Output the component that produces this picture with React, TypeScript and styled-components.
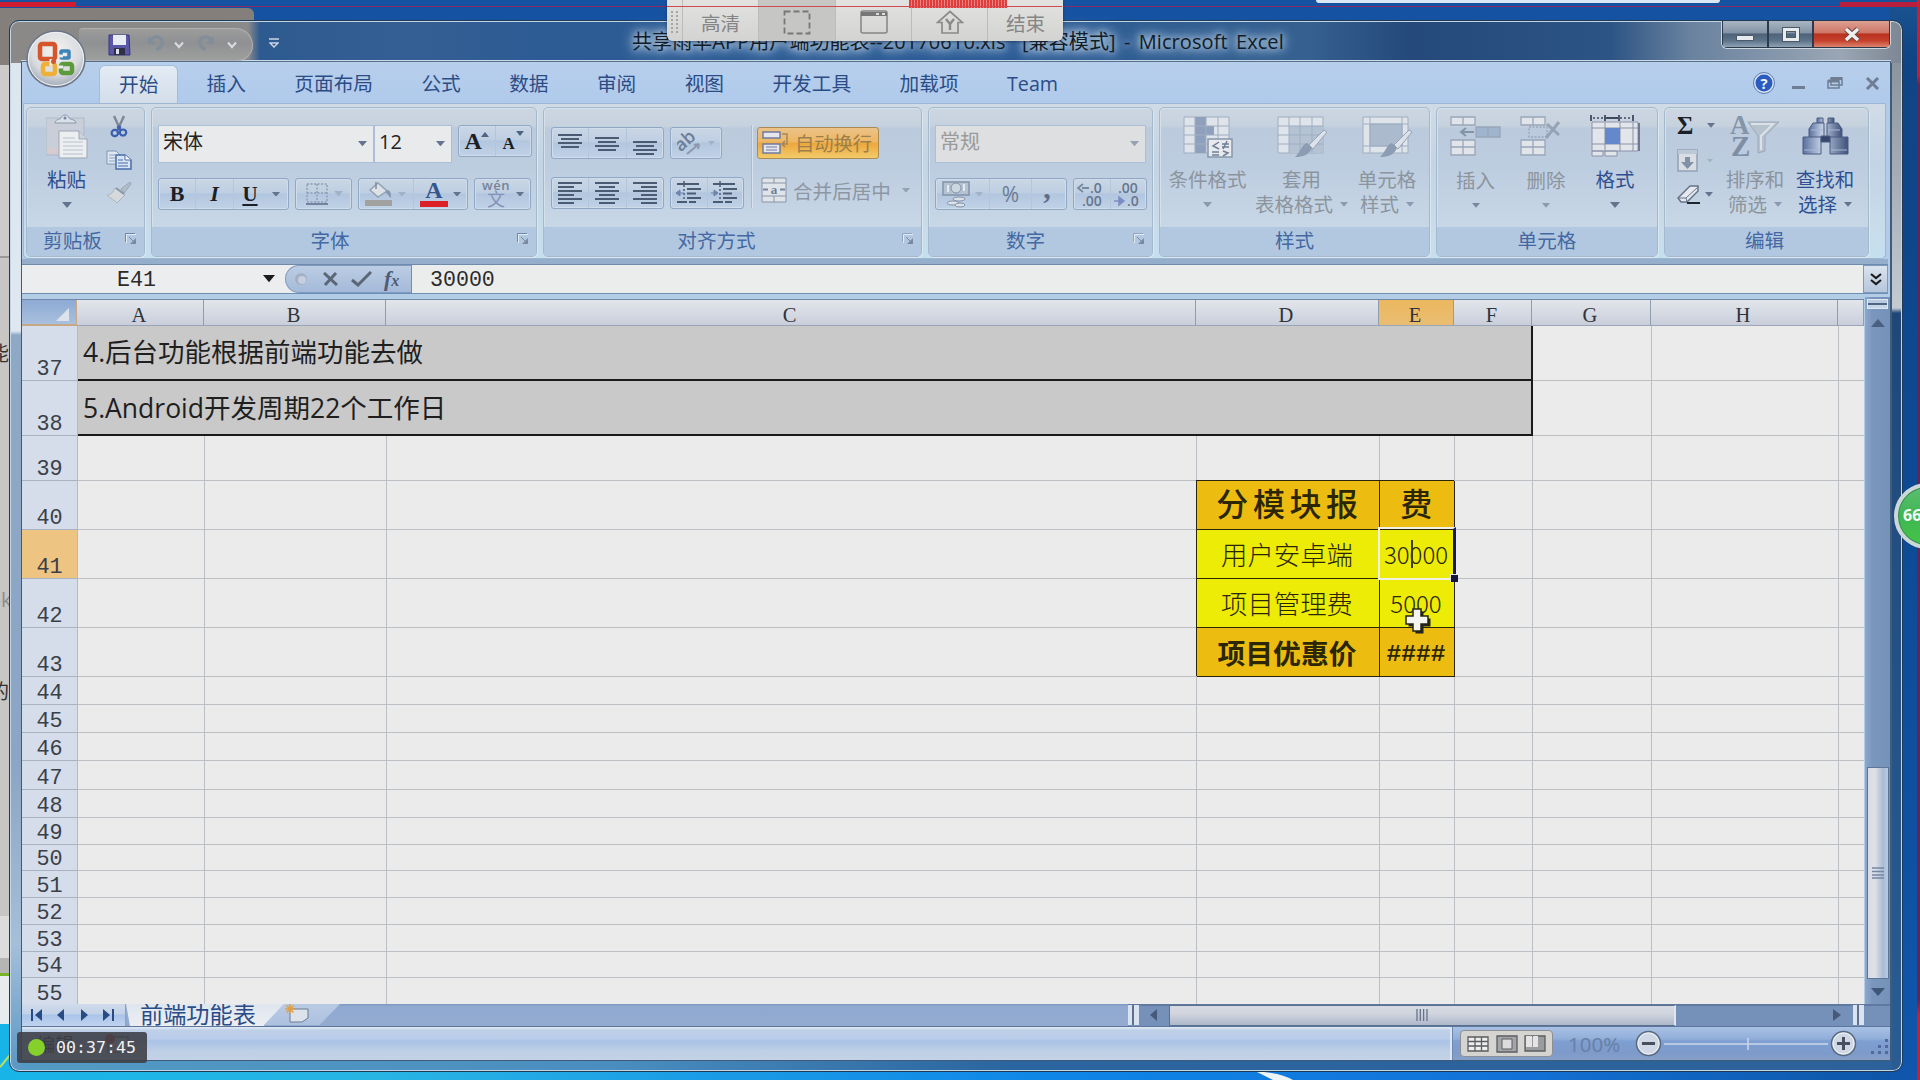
import React from "react";
import styled, { createGlobalStyle, css } from "styled-components";

const ui = `"Open Sans", "Noto Sans CJK SC", sans-serif`;
const mono = `"Liberation Mono", "Noto Sans CJK SC", monospace`;

const Global = createGlobalStyle`
  * { box-sizing: border-box; }
  body { margin: 0; background: #1553a4; overflow: hidden; }
`;

/* ---------- desktop ---------- */
const Desktop = styled.div`
  position: relative;
  width: 1920px;
  height: 1080px;
  overflow: hidden;
  font-family: ${ui};
  font-size: 20px;
  white-space: nowrap;
  background: linear-gradient(90deg, #18b4e8 0, #28b5e4 380px, #1b9ce6 700px, #0e86e8 1050px, #1272d8 1500px, #0f58ab 1860px, #0f52a4 100%);
`;
const TopStrip = styled.div`
  position: absolute;
  inset: 0 0 auto 0;
  height: 22px;
  background: #1652a2;
`;
const RightStrip = styled.div`
  position: absolute;
  top: 0;
  right: 0;
  width: 30px;
  height: 1080px;
  background: linear-gradient(180deg, #1b5390 0, #104484 60px, #0d4a94 500px, #0f56ac 100%);
`;
const BackWindow = styled.div`
  position: absolute;
  left: 0;
  top: 8px;
  width: 254px;
  height: 910px;
  border-radius: 0 6px 0 0;
  background: linear-gradient(180deg, #857f7c 0 57px, #cdcbc9 57px 248px, #9c9a99 248px 250px, #c8c6c4 250px);
`;
const BackGlyph = styled.div<{ $top: number; $faint?: boolean }>`
  position: absolute;
  left: -11px;
  top: ${(p) => p.$top}px;
  font-size: 20px;
  line-height: 24px;
  color: ${(p) => (p.$faint ? "#8d8b8a" : "#333")};
`;
const BackPanel = styled.div`
  position: absolute;
  left: 0;
  top: 916px;
  width: 12px;
  height: 108px;
  background: linear-gradient(180deg, #dcdcdc 0 42px, #b5b5b5 42px 57px, #76b428 57px 60px, #e8ecee 60px);
`;
const TopTab = styled.div`
  position: absolute;
  left: 1316px;
  top: 0;
  width: 404px;
  height: 3px;
  background: #dce8f4;
  border-radius: 0 0 4px 4px;
`;
const Line = styled.div<{ $x: number; $y: number; $w: number; $h: number; $c: string }>`
  position: absolute;
  left: ${(p) => p.$x}px;
  top: ${(p) => p.$y}px;
  width: ${(p) => p.$w}px;
  height: ${(p) => p.$h}px;
  background: ${(p) => p.$c};
`;
const Streak = styled.svg`
  position: absolute;
  left: 0;
  top: 1000px;
`;

/* ---------- window ---------- */
const Win = styled.div`
  position: absolute;
  left: 9px;
  top: 20px;
  width: 1894px;
  height: 1052px;
  border: 1px solid #1f3a55;
  border-radius: 10px;
  box-shadow: inset 0 0 0 1px #c4d6e6;
  padding: 0 11px 10px 11px;
  display: flex;
  flex-direction: column;
  background:
    linear-gradient(90deg, #8a8987 0, #8a8a8a 238px, #2d5a8f 250px, #345f94 400px, #2d5b93 520px, #2c5b94 1000px, #35608f 1300px, #24497a 1400px, #2c5484 1600px, #69829f 1680px, #9aa6b4 1830px, #7d8793 100%) 0 0 / 100% 42px no-repeat,
    linear-gradient(180deg, #dbe6ee 0, #dfe8f0 268px, #8ea9c6 272px, #8ba6c4 700px, #a5bfd9 880px, #5a97c4 100%) 0 42px / 12px 1008px no-repeat,
    linear-gradient(180deg, #8a949f 0, #b4bcc6 180px, #c3cad2 245px, #1f4879 250px, #2a5c92 100%) 1882px 42px / 12px 1008px no-repeat,
    linear-gradient(90deg, #539ac4 0, #4a8ebf 600px, #2b659f 1000px, #2d6199 100%);
`;
const TitleBar = styled.div`
  height: 40px;
  display: flex;
  align-items: center;
  flex: none;
  position: relative;
`;
const QuickBar = styled.div`
  margin: 7px 0 0 58px;
  width: 174px;
  height: 33px;
  border: 1px solid #b0b0b0;
  border-left: 0;
  border-radius: 4px 18px 16px 4px;
  background: linear-gradient(180deg, #9c9c9b, #8e9092 45%, #9ea09f);
  display: flex;
  align-items: center;
  padding-left: 29px;
`;
const Title = styled.div`
  position: absolute;
  left: 611px;
  top: 6px;
  font-size: 20px;
  letter-spacing: 0.08px;
  line-height: 30px;
  color: #111c28;
  word-spacing: 3px;
  text-shadow: 0 0 6px #b5cbe0, 0 0 10px #b5cbe0, 0 0 14px #9fbbd6, 0 0 18px #9fbbd6;
`;
const Buttons = styled.div`
  position: absolute;
  right: 0;
  top: 0;
  display: flex;
  height: 28px;
  border: 1px solid #cdd5de;
  border-top: 0;
  border-radius: 0 0 6px 6px;
  overflow: hidden;
`;
const WinBtn = styled.div<{ $w: number; $close?: boolean }>`
  width: ${(p) => p.$w}px;
  border: 1px solid #2c3b4b;
  border-top: 0;
  display: flex;
  align-items: center;
  justify-content: center;
  background: ${(p) =>
    p.$close
      ? "linear-gradient(180deg,#dba093 0,#cf7766 45%,#b83220 50%,#c5402a 75%,#dc8470)"
      : "linear-gradient(180deg,#a9b5c2 0,#8494a6 45%,#4e6379 50%,#5c7288 75%,#8fa3b5)"};
`;
const Client = styled.div`
  flex: 1;
  border: 1px solid #3f5b7a;
  border-top-color: #566f8a;
  box-shadow: 0 -1px 0 #c9d9e8;
  background: #b3cbe8;
  display: flex;
  flex-direction: column;
  min-height: 0;
`;
const TabRow = styled.div`
  height: 41px;
  flex: none;
  display: flex;
  align-items: flex-end;
  padding: 0 20px 0 77px;
  background: linear-gradient(180deg, #b7cfeb, #b0caec);
`;
const Tab = styled.div<{ $active?: boolean }>`
  height: 38px;
  line-height: 37px;
  font-size: 19.7px;
  padding: 0 24.2px;
  color: #2c4c86;
  ${(p) =>
    p.$active &&
    css`
      padding: 0 19px;
      margin-right: 4px;
      border: 1px solid #a3bcd8;
      border-bottom: 0;
      border-radius: 6px 6px 0 0;
      background: linear-gradient(180deg, #e3ebf4, #d3deea);
    `}
`;
const TabTools = styled.div`
  margin-left: auto;
  height: 40px;
  display: flex;
  align-items: center;
  margin-right: -10px;
`;

/* ---------- ribbon ---------- */
const Ribbon = styled.div`
  flex: none;
  height: 156px;
  margin: 0 4px 0 1px;
  padding: 3px 0 0 2px;
  border: 1px solid #9cb6d3;
  border-radius: 0 0 5px 5px;
  background: linear-gradient(180deg, #d0dbe6 0, #c3d4e5 40%, #c8dcea 80%, #c5e0ef);
  display: flex;
  gap: 6px;
`;
const Group = styled.div<{ $w: number }>`
  width: ${(p) => p.$w}px;
  height: 150px;
  border: 1px solid #a5b9cd;
  border-radius: 5px;
  box-shadow: 1px 1px 0 #dbe6ef, inset 1px 1px 0 #d6e0e9;
  display: flex;
  flex-direction: column;
  overflow: hidden;
  background: linear-gradient(180deg, #ccd6e2 0, #c7d2df 18px, #bbcadc 20px, #bdcde0 60px, #c8d7e6 118px);
`;
const Body = styled.div<{ $pad?: string; $gap?: number; $col?: boolean }>`
  flex: 1;
  display: flex;
  flex-direction: ${(p) => (p.$col ? "column" : "row")};
  padding: ${(p) => p.$pad ?? "0"};
  gap: ${(p) => p.$gap ?? 0}px;
`;
const Label = styled.div<{ $shift?: number }>`
  flex: none;
  height: 29px;
  background: #b2c8e0;
  color: #4468a2;
  font-size: 19.6px;
  line-height: 28px;
  display: flex;
  justify-content: center;
  position: relative;
  span { margin-left: ${(p) => p.$shift ?? 0}px; }
  svg { position: absolute; right: 7px; top: 5px; }
`;
const Row = styled.div<{ $gap?: number; $h?: number; $mt?: number; $ml?: number }>`
  display: flex;
  gap: ${(p) => p.$gap ?? 6}px;
  height: ${(p) => (p.$h ? p.$h + "px" : "auto")};
  margin-top: ${(p) => p.$mt ?? 0}px;
  margin-left: ${(p) => p.$ml ?? 0}px;
  flex: none;
`;
const Combo = styled.div<{ $w: number; $off?: boolean }>`
  width: ${(p) => p.$w}px;
  height: 38px;
  border: 1px solid #abc0d8;
  background: ${(p) => (p.$off ? "#dddfe0" : "#e8eaec")};
  color: ${(p) => (p.$off ? "#9a9a9a" : "#222")};
  display: flex;
  justify-content: space-between;
  padding: 0 6px 0 4px;
  font-size: 20px;
  line-height: 32px;
  svg { margin-top: 15px; }
`;
const Box = styled.div<{ $w: number; $h?: number }>`
  width: ${(p) => p.$w}px;
  height: ${(p) => p.$h ?? 32}px;
  border: 1px solid #8fa8c6;
  border-radius: 3px;
  display: flex;
  background: linear-gradient(180deg, #c9d6e5 0, #bfcfe2 45%, #b2c6df 50%, #c0d2e6);
  box-shadow: inset 0 0 0 1px #d0dcea;
`;
const Cell = styled.div<{ $w?: number }>`
  ${(p) => (p.$w ? `width:${p.$w}px;` : "flex:1;")}
  display: flex;
  align-items: center;
  justify-content: center;
  gap: 5px;
  & + & { border-left: 1px solid #b3c6dc; }
`;
const Glyph = styled.span<{ $size: number; $italic?: boolean; $under?: boolean }>`
  font: ${(p) => (p.$italic ? "italic" : "normal")} bold ${(p) => p.$size}px/1 "Liberation Serif", serif;
  color: #1c1f26;
  text-decoration: ${(p) => (p.$under ? "underline" : "none")};
  text-underline-offset: 3px;
`;
const Wrap = styled.div`
  width: 122px;
  height: 32px;
  border: 1px solid #a98b52;
  border-radius: 3px;
  display: flex;
  align-items: center;
  gap: 7px;
  padding-left: 4px;
  color: #9c7f4a;
  font-size: 19.3px;
  background: linear-gradient(180deg, #ecc287 0, #edb765 45%, #eda73c 52%, #f2cb6b);
`;
const Merge = styled.div`
  height: 32px;
  display: flex;
  align-items: center;
  gap: 6px;
  padding-left: 4px;
  color: #8d97a3;
  font-size: 19.6px;
  margin-top: -2px;
  svg:last-child { margin-left: 5px; }
`;
const Divider = styled.div`
  width: 2px;
  height: 83px;
  background: #a9bcd2;
  border-right: 1px solid #d7e2ec;
`;
const Big = styled.div<{ $w: number; $on?: boolean; $down?: number }>`
  width: ${(p) => p.$w}px;
  display: flex;
  flex-direction: column;
  align-items: center;
  color: ${(p) => (p.$on ? "#2f5090" : "#8c949e")};
  font-size: 19.5px;
  line-height: 25px;
  padding-top: 6px;
  > svg:first-child { margin-bottom: ${(p) => 9 + (p.$down ?? 0)}px; }
`;
const Under = styled.div`
  display: flex;
  align-items: center;
  gap: 7px;
  height: 25px;
`;
const Tools = styled.div<{ $w: number; $gap: number; $pt: number }>`
  width: ${(p) => p.$w}px;
  display: flex;
  flex-direction: column;
  align-items: flex-start;
  gap: ${(p) => p.$gap}px;
  padding-top: ${(p) => p.$pt}px;
`;

/* ---------- formula bar ---------- */
const Formula = styled.div`
  flex: none;
  height: 35px;
  margin-right: 2px;
  padding: 6px 0 0 0;
  background: linear-gradient(180deg, #94aecb 0 5px, #6f8bab 5px 6px, transparent 6px);
  display: flex;
  border-bottom: 1px solid #6e8fb4;
  font-family: ${mono};
  font-size: 21.6px;
  line-height: 31px;
  color: #2a2a2a;
`;
const NameBox = styled.div`
  width: 263px;
  background: #ecedee;
  display: flex;
  align-items: center;
  > span { width: 39px; margin: 3px 0 0 95px; }
  > svg { margin-left: 107px; }
`;
const FxBar = styled.div`
  width: 127px;
  background: #ecedee;
  border-right: 1px solid #6e8fb4;
  > div {
    height: 100%;
    border-radius: 14px 0 0 14px;
    border: 1px solid #7f9ac0;
    border-right: 0;
    background: linear-gradient(180deg, #bccde4, #a4bad9);
    display: flex;
    align-items: center;
    padding-left: 8px;
    gap: 15px;
  }
`;
const FormulaText = styled.div`
  flex: 1;
  background: #ebecec;
  padding-left: 18px;
`;
const Expand = styled.div`
  width: 25px;
  border: 1px solid #7f9ac0;
  background: linear-gradient(180deg, #dbe3ee, #b5c6dc);
  display: flex;
  align-items: center;
  justify-content: center;
`;

/* ---------- sheet ---------- */
const Main = styled.div`
  flex: none;
  height: 710px;
  display: flex;
  padding-top: 3px;
  background: #b3cde6;
`;
const Grid = styled.div`
  width: 1843px;
  margin-top: 2px;
  border-top: 1px solid #7089a8;
  overflow: hidden;
  background: #ebebec;
`;
const Line0 = styled.div<{ $h: number }>`
  display: flex;
  height: ${(p) => p.$h}px;
`;
const Corner = styled.div`
  width: 56px;
  border-right: 1px solid #c7a882;
  border-bottom: 2px solid #c7a882;
  background: linear-gradient(180deg, #8eaad4, #a9c0de);
  display: flex;
  justify-content: flex-end;
  align-items: flex-end;
  padding: 0 7px 3px 0;
`;
const ColHead = styled.div<{ $w: number; $sel?: boolean }>`
  width: ${(p) => p.$w}px;
  flex: none;
  text-align: center;
  font: 20.5px/30px "Liberation Serif", serif;
  color: #2f343a;
  padding-right: 2px;
  border-right: 1px solid #8f9dae;
  border-bottom: 1px solid #9aa6b5;
  background: ${(p) => (p.$sel ? "linear-gradient(180deg,#ebb85e,#e9bd72)" : "linear-gradient(180deg,#e2e5ea 0,#d6dae3 50%,#c9cedb)")};
`;
const RowHead = styled.div<{ $sel?: boolean }>`
  width: 56px;
  flex: none;
  display: flex;
  align-items: flex-end;
  justify-content: center;
  font: 21.8px/20px ${mono};
  color: #3a4048;
  border-right: 1px solid #a9bcd4;
  border-bottom: 1px solid #a7b3c2;
  background: ${(p) => (p.$sel ? "#edc482" : "#d4dde9")};
`;
const Note = styled.div`
  width: 1455px;
  flex: none;
  background: #c9c9c9;
  border-bottom: 2px solid #1a1a1a;
  border-right: 2px solid #1a1a1a;
  font-size: 26.5px;
  color: #1f1f1f;
  padding-left: 5px;
  display: flex;
  align-items: center;
  font-family: "Open Sans", "Noto Sans CJK SC", sans-serif;
`;
type Tone = "gold" | "yellow" | undefined;
const GridCell = styled.div<{ $w: number; $tone?: Tone }>`
  width: ${(p) => p.$w}px;
  flex: none;
  position: relative;
  border-right: 1px solid #bcbfc3;
  border-bottom: 1px solid #bcbfc3;
  display: flex;
  align-items: center;
  justify-content: center;
  ${(p) =>
    p.$tone &&
    css`
      padding-right: 2px;
      background: ${p.$tone === "gold" ? "#ecbd10" : "#ecec06"};
      border-color: #2a2408;
      box-shadow: -1px -1px 0 #2a2408;
    `}
`;
const CellText = styled.span<{ $kind: string }>`
  color: #2b2606;
  line-height: 30px;
  ${(p) => p.$kind === "head" && `font-family:"Noto Sans CJK SC",sans-serif;font-size:32px;font-weight:500;letter-spacing:4.6px;margin-right:-5px;margin-top:-7px;`}
  ${(p) => p.$kind === "item" && `font-family:"Noto Sans CJK SC",sans-serif;font-size:26.4px;font-weight:300;margin-top:-1px;`}
  ${(p) => p.$kind === "num" && `font-family:"Noto Sans CJK SC",sans-serif;font-size:24px;font-weight:300;margin-top:-1px;`}
  ${(p) => p.$kind === "total" && `font-family:"Noto Sans CJK SC",sans-serif;font-size:27.8px;font-weight:700;margin-top:-1px;`}
  ${(p) => p.$kind === "hash" && `font-family:"Liberation Mono",monospace;font-size:24.5px;font-weight:700;margin-top:6px;`}
`;
const Selection = styled.div`
  position: absolute;
  left: -2px;
  top: -3px;
  width: 78px;
  height: 53px;
  border: 2px solid #f0f0e4;
  border-right: 3px solid #15157a;
  z-index: 1;
  &::after {
    content: "";
    position: absolute;
    right: -5px;
    bottom: -4px;
    width: 7px;
    height: 7px;
    background: #16163c;
    border: 1px solid #e8e8e8;
    border-width: 1px 0 0 1px;
  }
`;
const Caret = styled.div`
  position: absolute;
  left: 31px;
  top: 10px;
  width: 2px;
  height: 28px;
  background: #3c3c10;
`;
const VScroll = styled.div`
  width: 25px;
  margin-left: 1px;
  padding: 2px 2px 0 2px;
  background: linear-gradient(90deg, #8da8cc, #7a96bd 30%, #7592b8);
  display: flex;
  flex-direction: column;
  align-items: center;
`;
const VSplit = styled.div`
  width: 21px;
  height: 10px;
  border: 1px solid #dfe8f1;
  background: linear-gradient(180deg, #b9cce2 0 3px, #4f6580 3px 5px, #c5d6e8 5px);
`;
const VThumb = styled.div`
  width: 22px;
  height: 212px;
  border: 1px solid #5d7596;
  background: linear-gradient(90deg, #d7dbe4 0, #dfe1e6 35%, #a9bcd6 75%, #b9cbe2);
  display: flex;
  align-items: center;
  justify-content: center;
`;

/* ---------- sheet tabs and status bar ---------- */
const SheetBar = styled.div`
  flex: none;
  height: 23px;
  display: flex;
  border-bottom: 1px solid #5d769c;
  background: linear-gradient(180deg, #7f9ac4 0 1px, #90a9d0 2px, #94abcf);
`;
const Nav = styled.div`
  width: 104px;
  display: flex;
  align-items: center;
  justify-content: space-between;
  padding: 0 10px 0 8px;
  background: linear-gradient(180deg, #cfdbea 0, #c3d2e8 45%, #a9c4ea 50%, #c0d3ee);
  border-right: 1px solid #8aa2c4;
`;
const SheetTab = styled.div`
  width: 160px;
  height: 22px;
  padding-left: 14px;
  color: #2b4c86;
  font-size: 23.2px;
  line-height: 21px;
  clip-path: polygon(0 0, 100% 0, 86% 100%, 4px 100%);
  background: linear-gradient(180deg, #dfe6ef, #ebeff3);
`;
const NewTab = styled.div`
  width: 76px;
  height: 21px;
  margin-left: -22px;
  display: flex;
  justify-content: center;
  padding-right: 8px;
  clip-path: polygon(26% 0, 100% 0, 73% 100%, 0 100%);
  background: linear-gradient(180deg, #b9cae3, #adc1e0);
`;
const HScroll = styled.div`
  margin-left: auto;
  width: 762px;
  display: flex;
  align-items: center;
  background: linear-gradient(180deg, #60799f 0 2px, #7591b9 2px);
`;
const HSplit = styled.div<{ $ml?: number }>`
  width: 11px;
  height: 20px;
  flex: none;
  margin-left: ${(p) => p.$ml ?? 0}px;
  background: linear-gradient(90deg, #d9e4f0 0 4px, #5c718c 4px 6px, #d9e4f0 6px);
`;
const HThumb = styled.div`
  width: 507px;
  height: 21px;
  flex: none;
  margin-left: 12px;
  border: 1px solid #5a7091;
  border-right: 2px solid #dfe6f0;
  background: linear-gradient(180deg, #d6dae2 0, #d0d5de 40%, #aeb8cb);
  display: flex;
  align-items: center;
  justify-content: center;
`;
const Status = styled.div`
  flex: 1;
  display: flex;
  justify-content: flex-end;
  background: linear-gradient(180deg, #dbe6f2 0 1px, #bfd0e8 3px, #b9cdea 12px, #a9c2e6 14px, #bed0e6 24px, #c3d2e6);
`;
const StatusLeft = styled.div`
  flex: 1;
  display: flex;
  align-items: center;
  gap: 30px;
  padding-left: 14px;
  color: #222;
  font-size: 19px;
  border-right: 2px solid #dbe6f2;
`;
const StatusRight = styled.div`
  width: 438px;
  display: flex;
  align-items: center;
  padding: 0 1px 0 7px;
  border-left: 1px solid #6e89b0;
  background: linear-gradient(180deg, #a9c1e4 0, #91aeda 12px, #7e9fd2 14px, #7d9aca 26px, #86a0c8);
`;
const Views = styled.div`
  width: 93px;
  height: 27px;
  border: 1px solid #8c8f93;
  border-radius: 4px;
  background: #d5d4d0;
  display: flex;
  align-items: center;
  justify-content: space-evenly;
`;
const Zoom = styled.div`
  width: 82px;
  padding-left: 15px;
  color: #6a80a6;
  font-size: 20.5px;
  line-height: 28px;
  font-family: "Noto Sans", sans-serif;
`;

/* ---------- overlays ---------- */
const Orb = styled.svg`
  position: absolute;
  left: 24px;
  top: 28px;
`;
const Recorder = styled.div`
  position: absolute;
  left: 667px;
  top: 0;
  width: 396px;
  height: 41px;
  display: flex;
  border-radius: 0 0 6px 6px;
  background: linear-gradient(180deg, #e2e2e1, #d3d3d2);
  box-shadow: 0 1px 3px rgba(20, 40, 70, 0.6);
  color: #858585;
  font-size: 19.6px;
  overflow: hidden;
`;
const Seg = styled.div<{ $w: number; $dark?: boolean }>`
  width: ${(p) => p.$w}px;
  flex: none;
  display: flex;
  align-items: center;
  justify-content: center;
  padding-top: 4px;
  border-right: 1px solid #bcbcbc;
  background: ${(p) => (p.$dark ? "#c6c6c5" : "transparent")};
  &:last-child { border: 0; }
`;
const Dotted = styled.div`
  position: absolute;
  left: 909px;
  top: 0;
  width: 98px;
  height: 8px;
  background: repeating-linear-gradient(90deg, #e23b3b 0 2px, #e88484 2px 3px);
`;
const Timer = styled.div`
  position: absolute;
  left: 17px;
  top: 1032px;
  width: 130px;
  height: 31px;
  border-radius: 3px;
  background: rgba(62, 64, 72, 0.9);
  display: flex;
  align-items: center;
  padding-left: 11px;
  gap: 11px;
  color: #f2f2f2;
  font: 16.6px/33px "DejaVu Sans Mono", monospace;
  i { width: 17px; height: 17px; border-radius: 50%; background: #86d02c; }
`;
const Ball = styled.div`
  position: absolute;
  left: 1894px;
  top: 483px;
  width: 66px;
  height: 66px;
  border-radius: 50%;
  border: 4px solid #ccd8d8;
  background: linear-gradient(180deg, #5cbf70 0, #3fb653 50%, #46c447);
  box-shadow: inset 0 0 0 1px #3a8a56;
  color: #f4faf4;
  font: 700 16px/57px "Noto Sans", sans-serif;
  padding-left: 5px;
`;
const Pointer = styled.svg`
  position: absolute;
  left: 1404px;
  top: 608px;
`;

/* ---------- icons ---------- */
const Caret5 = ({ c = "#64748c", w = 10 }: { c?: string; w?: number }) => (
  <svg width={w} height={w * 0.6} viewBox="0 0 10 6"><path d="M0 0h10L5 6z" fill={c} /></svg>
);
const Chevron = ({ ml }: { ml: number }) => (
  <svg width="10" height="8" viewBox="0 0 10 8" style={{ marginLeft: ml }}><path d="M1 1.500l4 4.500 4-4.500" stroke="#d5d9dd" strokeWidth="2.200" fill="none" /></svg>
);
const Launcher = ({ c = "#6d86ab" }: { c?: string }) => (
  <svg width="13" height="13" viewBox="0 0 13 13" fill="none" stroke={c}>
    <path d="M1.5 10V1.5H11" /><path d="M5 5l5 5" stroke="#7b8aa0" /><path d="M12 6v6H6z" fill="#7b8aa0" stroke="none" /><path d="M2.500 11V2.500H12" stroke="#e3ebf3" />
  </svg>
);
const Lines = ({ rows, y = 4 }: { rows: [number, number][]; y?: number }) => (
  <svg width="26" height="28" viewBox="0 0 26 28" stroke="#4c5b74" strokeWidth="1.8">
    {rows.map(([a, b], i) => <path key={i} d={`M${a} ${y + i * 4}H${b}`} />)}
  </svg>
);
const Indent = ({ flip }: { flip?: boolean }) => (
  <svg width="28" height="28" viewBox="0 0 28 28" stroke="#4c5b74" strokeWidth="2" fill="none">
    <path d="M2 5h22M12 10h14M12 14.500h9M12 19h14M2 23h10M14 23h7" /><path d="M9 2v24" strokeDasharray="2 2" strokeWidth="1.500" />
    <path d={flip ? "M0 14h5M3 11l4 3-4 3z" : "M9 14H4M5 11l-4 3 4 3z"} stroke="#6c83ad" fill="#6c83ad" strokeWidth="1" />
  </svg>
);
const Paste = () => (
  <svg width="42" height="46" viewBox="0 0 42 46">
    <path d="M0 4h38v37H0z" fill="#c9ced8" stroke="#aeb9c9" /><path d="M1 34h12v6H1z" fill="#d8cbcf" />
    <path d="M9 9c0-4 5-3 6-5 1-4 7-4 8 0 1 2 7 1 7 5z" fill="#d9e0e8" stroke="#8898ae" /><circle cx="19" cy="4" r="1.500" fill="#76869e" />
    <path d="M13 17h20l8 8v19H13z" fill="#eceef0" stroke="#9aa7b8" /><path d="M33 17v8h8" fill="#cdd4dd" stroke="#9aa7b8" />
    <path d="M17 24h12M17 28h20M17 32h20M17 36h20M17 40h20" stroke="#b8c1cd" />
  </svg>
);
const Cut = () => (
  <svg width="18" height="23" viewBox="0 0 18 23" fill="none">
    <path d="M4 1l6 13M14 1L8 14" stroke="#7b8796" strokeWidth="2.400" /><path d="M7.500 11l3 4M10.500 11l-3 4" stroke="#3f62a8" strokeWidth="2.500" />
    <ellipse cx="4.800" cy="18" rx="3.200" ry="3.200" stroke="#3a5fae" strokeWidth="2.200" /><ellipse cx="13" cy="17.500" rx="3.200" ry="3" stroke="#3a5fae" strokeWidth="2.200" />
  </svg>
);
const Copy = () => (
  <svg width="26" height="20" viewBox="0 0 26 20" stroke="#4a6ca8">
    <path d="M1 1h9l4 4v9H1z" fill="#dfe7f1" stroke="#7f97bb" /><path d="M3 5h6M3 8h8M3 11h8" stroke="#8ba2c4" />
    <path d="M10 5h9l6 5v9H10z" fill="#d7e4f4" strokeWidth="1.500" /><path d="M19 5v5h6" fill="#fff" /><path d="M12 10h5M12 13h10M12 16h10" />
  </svg>
);
const Brush = () => (
  <svg width="26" height="22" viewBox="0 0 26 22">
    <path d="M24 0l-9 7 3 4 7-9z" fill="#b3bcc9" stroke="#98a5b6" /><path d="M9 6l10 7-8 8c-3-3-6-4-10-8 4 0 6-3 8-7z" fill="#d6d9dc" stroke="#a9b2be" /><path d="M10 6l8 6" stroke="#8b98aa" strokeWidth="2" />
  </svg>
);
const BordersIcon = () => (
  <svg width="24" height="24" viewBox="0 0 24 24" stroke="#8c9cb2" fill="none"><path d="M2 2h20v18H2zM12 2v18M2 11h20" strokeDasharray="2 1.500" strokeWidth="1.400" /><path d="M1 22h22" stroke="#7284a0" strokeWidth="2" /></svg>
);
const Bucket = () => (
  <svg width="28" height="26" viewBox="0 0 28 26"><path d="M5 9l8-7 9 8-9 6z" fill="#dde2e7" stroke="#93a1b3" strokeWidth="1.500" /><path d="M11 8V1" stroke="#7d8ca0" strokeWidth="1.500" /><path d="M21 9c5 0 5 3 5 8-2-1-3-4-5-5z" fill="#8597b0" /><path d="M0 19h27v6H0z" fill="#a1a1a0" /></svg>
);
const FontColor = () => (
  <svg width="28" height="28" viewBox="0 0 28 28"><text x="14" y="18" textAnchor="middle" fontFamily="Liberation Serif, serif" fontWeight="700" fontSize="24" fill="#34578e">A</text><path d="M0 21h28v6H0z" fill="#dc2028" /></svg>
);
const Wen = () => (
  <svg width="30" height="28" viewBox="0 0 30 28"><text x="15" y="10" textAnchor="middle" fontFamily="Open Sans, sans-serif" fontWeight="600" fontSize="13" fill="#74839a" letterSpacing=".5">wén</text><text x="15" y="26" textAnchor="middle" fontFamily="Noto Sans CJK SC, sans-serif" fontSize="18" fill="#8291b8">文</text></svg>
);
const Rotate = () => (
  <svg width="26" height="26" viewBox="0 0 26 26"><text x="0" y="17" transform="rotate(-42 9 15)" fontFamily="Open Sans, sans-serif" fontWeight="600" fontSize="18" fill="#6f7e94">ab</text><path d="M10 24L22 14M22 14l-5 1M22 14l-1 5" stroke="#8c99ad" strokeWidth="2" /></svg>
);
const WrapIcon = () => (
  <svg width="26" height="28" viewBox="0 0 26 28" fill="#e6e6ec" stroke="#6f7ba0" strokeWidth="1.500"><path d="M1 3h17v6H1zM1 15h17v9H1z" /><path d="M4 18h11M4 21h11" strokeWidth="1.200" /><path d="M20 5h5v10h-4M23 12l-3 3 3 3" fill="none" stroke="#a5865a" /></svg>
);
const MergeIcon = () => (
  <svg width="26" height="26" viewBox="0 0 26 26" stroke="#8794a8" fill="#dfe4e9"><path d="M1 1h24v24H1z" /><path d="M1 6h24M1 19h24M13 1v5M13 19v6" /><path d="M2 12.500h5M19 12.500h5" stroke="#75869f" strokeWidth="2" /><text x="13" y="17" textAnchor="middle" fontFamily="Liberation Serif, serif" fontWeight="700" fontSize="13" fill="#6c7c95" stroke="none">a</text></svg>
);
const Money = () => (
  <svg width="28" height="30" viewBox="0 0 28 30" stroke="#8292a8" fill="#b5c2d2"><path d="M1 3h26v13H1z" strokeWidth="1.500" /><circle cx="14" cy="9" r="5" fill="#ccd6e1" /><path d="M6 6v7M22 5v7" stroke="#e3e9ef" strokeWidth="2" /><ellipse cx="17" cy="20" rx="6" ry="2" fill="#dce2e8" /><ellipse cx="11" cy="24" rx="6" ry="2" fill="#dce2e8" /><ellipse cx="18" cy="26" rx="5" ry="2" fill="#dce2e8" /></svg>
);
const Dec = ({ less }: { less?: boolean }) => (
  <svg width="30" height="28" viewBox="0 0 30 28" fontFamily="Open Sans, sans-serif" fontWeight="600" fontSize="14" fill="#67768c">
    {less ? <><text x="5" y="13">.00</text><text x="14" y="26">.0</text><path d="M1 21h7M6 17l5 4-5 4z" fill="#7b8dc4" stroke="#7b8dc4" strokeWidth="1.500" /></> : <><text x="13" y="13">.0</text><text x="5" y="26">.00</text><path d="M12 8H5M6 4L1 8l5 4" fill="none" stroke="#76889f" strokeWidth="1.800" /></>}
  </svg>
);
const SheetIcon = ({ kind }: { kind: "cond" | "table" | "cell" }) => (
  <svg width="50" height="43" viewBox="0 0 50 43" stroke="#9faec2" fill="#dfe4ea">
    <path d="M1 2h45v36H1z" />
    {kind === "cell" ? <><path d="M8 9h32v22H8z" fill="#abbacd" /><path d="M1 9h45M1 31h45M8 2v36M40 2v36" /></> : <><path d={kind === "cond" ? "M12 2h11v9h8v9h-8v18H12z" : "M12 11h34v27H12z"} fill={kind === "cond" ? "#8fa0bd" : "#b4c2d4"} stroke="none" /><path d="M1 11h45M1 20h45M1 29h45M12 2v36M23 2v36M35 2v36" /></>}
    {kind === "cond" ? <><path d="M25 24h24v18H25z" fill="#e7e9ec" stroke="#8796ab" strokeWidth="1.500" /><path d="M36 27l-6 4 6 3M29 37h7M29 40h7M39 29h7M39 32h7M44 26l-4 8M40 36l5 2-5 3" stroke="#6f7f97" strokeWidth="1.500" fill="none" /></> : <><path d="M47 15l3 2-14 17-4-4z" fill="#dce2e8" stroke="#94a3b7" /><path d="M30 28l5 5c-3 7-9 9-17 9 5-4 7-13 12-14z" fill="#8c9cb2" stroke="none" /></>}
  </svg>
);
const CellsIcon = ({ del }: { del?: boolean }) => (
  <svg width="52" height="43" viewBox="0 0 52 43" stroke="#98a6ba" fill="#e1e5ea" strokeWidth="1.300">
    <path d="M1 2h24v8H1zM13 2v8M1 25h24v15H1zM13 25v15M1 32h24" />
    {del ? <><path d="M9 12h18v10H9z" fill="none" strokeDasharray="2 1.500" /><path d="M27 9l12 11M39 7L26 23" stroke="#95a3b6" strokeWidth="3" /></> : <><path d="M26 12h24v10H26zM38 12v10" fill="#9fb4cd" /><path d="M24 17H12M16 13l-5 4 5 4" fill="none" stroke="#8393aa" strokeWidth="2" /></>}
  </svg>
);
const FormatIcon = () => (
  <svg width="52" height="44" viewBox="0 0 52 44" stroke="#8a93a8" fill="#e2e5ea">
    <path d="M3 7h46v29H3zM3 36h11v5H3zM16 36h12v5H16z" /><path d="M3 13h46M3 29h46M16 7v29M31 7v29M44 7v29" /><path d="M16 13h15v16H16z" fill="#6488cc" stroke="none" />
    <path d="M2 0v6M44 0v6M16 0v6M30 0v6M17 3h12" stroke="#3d4a5e" strokeWidth="1.800" /><path d="M4 3h11M31 3h12" stroke="#3d4a5e" strokeDasharray="2 2" strokeWidth="1.500" /><path d="M50 8v28" stroke="#6d7890" strokeWidth="2" />
  </svg>
);
const SortIcon = () => (
  <svg width="52" height="44" viewBox="0 0 52 44"><path d="M19 8h31L36 22v15l-7 2V22z" fill="#b7c2cf" stroke="#9aa8b9" /><path d="M22 10h22L32 22v14" fill="none" stroke="#dbe1e7" strokeWidth="2" /><text x="1" y="20" fontFamily="Liberation Serif, serif" fontSize="27" fontWeight="700" fill="#8494a9">A</text><text x="2" y="42" fontFamily="Liberation Serif, serif" fontSize="29" fontWeight="700" fill="#7e8ea4">Z</text></svg>
);
const Binoculars = () => (
  <svg width="48" height="43" viewBox="0 0 48 43" stroke="#4a5c82">
    <defs><linearGradient id="bn"><stop offset="0" stopColor="#5a6f9c" /><stop offset=".4" stopColor="#c2cfe4" /><stop offset="1" stopColor="#3d5079" /></linearGradient></defs>
    <g fill="url(#bn)"><path d="M16 4h6v5h-6zM27 4h6v5h-6z" /><path d="M12 9h11v15H8v-9zM26 9h11l4 6v9H26z" /><path d="M2 23h18v17H2zM29 23h18v17H29z" /><path d="M20 22h9v6h-9z" fill="#35476d" /></g><path d="M3 36h16M30 36h16M10 16h12M27 16h12" stroke="#a9b8d4" />
  </svg>
);
const FillIcon = () => <svg width="22" height="23" viewBox="0 0 22 23"><path d="M1 1h19v21H1z" fill="#d9dee4" stroke="#92a1b5" strokeWidth="1.500" /><path d="M1 1h19v4H1z" fill="#bcc8d6" /><path d="M8 8h5v5h4l-6.500 7L4 13h4z" fill="#8191a8" /></svg>;
const Eraser = () => <svg width="24" height="19" viewBox="0 0 24 19"><path d="M1 13L13 1h8v5L10 17H4z" fill="#e6e9ee" stroke="#66758b" strokeWidth="1.500" /><path d="M1 13h8L21 2M9 13l1 4" fill="none" stroke="#66758b" /><path d="M10 18h13" stroke="#20262e" strokeWidth="2" /></svg>;
const Disk = () => <svg width="23" height="22" viewBox="0 0 23 22"><path d="M1 1h20l1 20H1z" fill="#5a58a6" stroke="#35357c" /><path d="M5 1h13v10H5z" fill="#e7ebf3" /><path d="M6 14h11v7H6z" fill="#2e3048" /><path d="M8 15h3v5H8z" fill="#dfe3ee" /></svg>;
const Undo = ({ r, ml }: { r?: boolean; ml: number }) => <svg width="17" height="17" viewBox="0 0 17 17" style={{ marginLeft: ml, marginTop: -4 }}><g transform={r ? "translate(17 0) scale(-1 1)" : ""}><path d="M3 6c4-6 12-3 11 4-1 3-3 5-6 5" fill="none" stroke="#818d9a" strokeWidth="3" /><path d="M0 2v8h8z" fill="#818d9a" /></g></svg>;
const Tri = ({ left, bar }: { left?: boolean; bar?: boolean }) => (
  <svg width="13" height="12" viewBox="0 0 13 12" fill="#274b84"><g transform={left ? "" : "translate(13 0) scale(-1 1)"}><path d={bar ? "M12 0v12L5 6z" : "M10 0v12L3 6z"} />{bar && <path d="M1 0h2v12H1z" />}</g></svg>
);
const Round = ({ plus }: { plus?: boolean }) => (
  <svg width="27" height="27" viewBox="0 0 27 27"><circle cx="13.500" cy="13.500" r="12" fill="#cfd8e4" stroke="#58687f" strokeWidth="1.500" /><circle cx="13.500" cy="13.500" r="10.500" fill="none" stroke="#eef2f6" /><path d={plus ? "M7 13.500h13M13.500 7v13" : "M7 13.500h13"} stroke="#46505e" strokeWidth="3" /></svg>
);

/* ---------- data ---------- */
const tabs = ["插入", "页面布局", "公式", "数据", "审阅", "视图", "开发工具", "加载项", "Team"];
const cols: [string, number][] = [["A", 127], ["B", 182], ["C", 810], ["D", 183], ["E", 75], ["F", 78], ["G", 119], ["H", 187]];
const restW = 26;
const rows: [number, number][] = [
  [39, 45], [40, 49], [41, 49], [42, 49], [43, 49], [44, 28], [45, 28], [46, 28], [47, 29], [48, 28],
  [49, 27], [50, 26], [51, 27], [52, 27], [53, 27], [54, 26], [55, 28],
];
const filled: Record<string, { t: string; k: string; tone: Tone }> = {
  D40: { t: "分模块报", k: "head", tone: "gold" }, E40: { t: "费", k: "head", tone: "gold" },
  D41: { t: "用户安卓端", k: "item", tone: "yellow" }, E41: { t: "30000", k: "num", tone: "yellow" },
  D42: { t: "项目管理费", k: "item", tone: "yellow" }, E42: { t: "5000", k: "num", tone: "yellow" },
  D43: { t: "项目优惠价", k: "total", tone: "gold" }, E43: { t: "####", k: "hash", tone: "gold" },
};
const notes: [number, string][] = [[37, "4.后台功能根据前端功能去做"], [38, "5.Android开发周期22个工作日"]];

function RibbonGroups() {
  return (
    <Ribbon>
      <Group $w={119}>
        <Body>
          <Big $w={79} $on $down={-2}><Paste />粘贴<Under><Caret5 /></Under></Big>
          <Tools $w={36} $gap={12} $pt={7}><span style={{ marginLeft: 4, lineHeight: 0 }}><Cut /></span><Copy /><Brush /></Tools>
        </Body>
        <Label $shift={-26}><span>剪贴板</span><Launcher /></Label>
      </Group>
      <Group $w={386}>
        <Body $col $pad="17px 0 0 6px">
          <Row $gap={0} $h={38}>
            <Combo $w={216}>宋体<Caret5 w={9} /></Combo><Combo $w={78}>12<Caret5 w={9} /></Combo>
            <Row $ml={6}><Box $w={74}><Cell><Glyph $size={24}>A</Glyph><svg width="8" height="18" viewBox="0 0 8 18" style={{ marginLeft: -6 }}><path d="M0 5h8L4 0z" fill="#4d6384" /></svg></Cell><Cell><Glyph $size={17} style={{ marginTop: 5 }}>A</Glyph><svg width="8" height="20" viewBox="0 0 8 20" style={{ marginLeft: -4 }}><path d="M0 0h8L4 5z" fill="#4d6384" /></svg></Cell></Box></Row>
          </Row>
          <Row $mt={15}>
            <Box $w={131}><Cell $w={36}><Glyph $size={22}>B</Glyph></Cell><Cell $w={38}><Glyph $size={22} $italic>I</Glyph></Cell><Cell><Glyph $size={21} $under>U</Glyph><span style={{ marginLeft: 4 }} /><Caret5 w={8} /></Cell></Box>
            <Box $w={57}><Cell><BordersIcon /><Caret5 w={9} c="#a2b2c6" /></Cell></Box>
            <Box $w={110}><Cell><Bucket /><Caret5 w={8} c="#a2b2c6" /></Cell><Cell><FontColor /><Caret5 w={8} /></Cell></Box>
            <Box $w={57}><Cell><Wen /><Caret5 w={8} /></Cell></Box>
          </Row>
        </Body>
        <Label $shift={-28}><span>字体</span><Launcher /></Label>
      </Group>
      <Group $w={379}>
        <Body $pad="17px 0 0 7px" $gap={6}>
          <Row $gap={0}>
            <Tools $w={200} $gap={18} $pt={2}>
              <Row><Box $w={113}><Cell><Lines y={6} rows={[[1, 25], [4, 22], [1, 25], [4, 22]]} /></Cell><Cell><Lines y={9} rows={[[1, 25], [4, 22], [1, 25], [4, 22]]} /></Cell><Cell><Lines y={13} rows={[[1, 25], [4, 22], [1, 25], [4, 22]]} /></Cell></Box><Box $w={52}><Cell><Rotate /><Caret5 w={7} c="#a2b2c6" /></Cell></Box></Row>
              <Row><Box $w={113}><Cell><Lines rows={[[1, 25], [1, 17], [1, 25], [1, 17], [1, 25], [1, 17]]} /></Cell><Cell><Lines rows={[[1, 25], [5, 21], [1, 25], [5, 21], [1, 25], [5, 21]]} /></Cell><Cell><Lines rows={[[1, 25], [9, 25], [1, 25], [9, 25], [1, 25], [9, 25]]} /></Cell></Box><Box $w={74}><Cell><Indent /></Cell><Cell><Indent flip /></Cell></Box></Row>
            </Tools>
            <Divider />
            <Tools $w={160} $gap={17} $pt={2}>
              <Row $ml={4}><Wrap><WrapIcon />自动换行</Wrap></Row>
              <Row $ml={4}><Merge><MergeIcon />合并后居中<Caret5 w={8} c="#93a2b5" /></Merge></Row>
            </Tools>
          </Row>
        </Body>
        <Label $shift={-32}><span>对齐方式</span><Launcher c="#92a5c0" /></Label>
      </Group>
      <Group $w={225}>
        <Body $col $pad="17px 0 0 6px">
          <Row><Combo $w={211} $off>常规<Caret5 w={9} c="#96a2b2" /></Combo></Row>
          <Row $mt={15}>
            <Box $w={132}><Cell $w={53}><Money /><Caret5 w={8} c="#a2b2c6" /></Cell><Cell $w={42} style={{ color: "#6c7c93", fontSize: 21 }}>%</Cell><Cell><Glyph $size={30} style={{ color: "#5b6e8a", marginTop: -13, marginLeft: -4 }}>,</Glyph></Cell></Box>
            <Box $w={74}><Cell><Dec /></Cell><Cell><Dec less /></Cell></Box>
          </Row>
        </Body>
        <Label $shift={-30}><span>数字</span><Launcher c="#92a5c0" /></Label>
      </Group>
      <Group $w={271}>
        <Body $pad="1px 0 0 5px">
          <Big $w={85}><SheetIcon kind="cond" />条件格式<Under><Caret5 w={9} c="#8b9ab0" /></Under></Big>
          <Big $w={103}><SheetIcon kind="table" />套用<Under>表格格式<Caret5 w={8} c="#8b9ab0" /></Under></Big>
          <Big $w={68}><SheetIcon kind="cell" />单元格<Under>样式<Caret5 w={8} c="#8b9ab0" /></Under></Big>
        </Body>
        <Label><span>样式</span></Label>
      </Group>
      <Group $w={222}>
        <Body $pad="1px 0 0 2px">
          <Big $w={73} $down={1}><CellsIcon />插入<Under><Caret5 w={8} c="#7787a0" /></Under></Big>
          <Big $w={68} $down={1}><CellsIcon del />删除<Under><Caret5 w={8} c="#8b9ab0" /></Under></Big>
          <Big $w={70} $on $down={-1}><FormatIcon />格式<Under><Caret5 w={10} /></Under></Big>
        </Body>
        <Label><span>单元格</span></Label>
      </Group>
      <Group $w={205}>
        <Body $pad="0 0 0 12px">
          <Tools $w={44} $gap={13} $pt={7}>
            <Row $gap={11} style={{ alignItems: "center" }}><Glyph $size={25} style={{ width: 19, height: 21, lineHeight: "22px" }}>Σ</Glyph><Caret5 w={8} /></Row>
            <Row $gap={8} style={{ alignItems: "center" }}><FillIcon /><Caret5 w={6} c="#a2b2c6" /></Row>
            <Row $gap={4} style={{ alignItems: "center" }}><Eraser /><Caret5 w={8} /></Row>
          </Tools>
          <Big $w={68}><SortIcon />排序和<Under>筛选<Caret5 w={8} c="#8b9ab0" /></Under></Big>
          <Big $w={72} $on $down={1}><Binoculars />查找和<Under>选择<Caret5 w={8} /></Under></Big>
        </Body>
        <Label $shift={-4}><span>编辑</span></Label>
      </Group>
    </Ribbon>
  );
}

function Sheet() {
  return (
    <Main>
      <Grid>
        <Line0 $h={26}>
          <Corner><svg width="13" height="13"><path d="M13 0v13H0z" fill="#dce3ea" /></svg></Corner>
          {cols.map(([c, w]) => <ColHead key={c} $w={w} $sel={c === "E"}>{c}</ColHead>)}
          <ColHead $w={restW} />
        </Line0>
        {notes.map(([n, t]) => (
          <Line0 key={n} $h={55}>
            <RowHead>{n}</RowHead><Note><span style={{ marginTop: n === 37 ? -5 : -3 }}>{t}</span></Note>
            {[119, 187, restW].map((w) => <GridCell key={w} $w={w} />)}
          </Line0>
        ))}
        {rows.map(([n, h]) => (
          <Line0 key={n} $h={h}>
            <RowHead $sel={n === 41}>{n}</RowHead>
            {cols.map(([c, w]) => {
              const f = filled[c + n];
              return (
                <GridCell key={c} $w={w} $tone={f?.tone}>
                  {f && <CellText $kind={f.k}>{f.t}</CellText>}
                  {c + n === "E41" && <><Selection /><Caret /></>}
                </GridCell>
              );
            })}
            <GridCell $w={restW} />
          </Line0>
        ))}
      </Grid>
      <VScroll>
        <VSplit />
        <svg width="14" height="8" style={{ margin: "10px 0 440px", flex: "none" }}><path d="M0 8h14L7 0z" fill="#4a6080" /></svg>
        <VThumb><svg width="12" height="12" stroke="#7486a3" strokeWidth="1.5"><path d="M0 1h12M0 4.500h12M0 8h12M0 11h12" /></svg></VThumb>
        <svg width="14" height="8" style={{ marginTop: 9 }}><path d="M0 0h14L7 8z" fill="#3f5677" /></svg>
      </VScroll>
    </Main>
  );
}

export default function App() {
  return (
    <Desktop>
      <Global />
      <TopStrip />
      <RightStrip />
      <BackWindow />
      <BackPanel />
      <BackGlyph $top={342}>能</BackGlyph>
      <BackGlyph $top={588} $faint>ok</BackGlyph>
      <BackGlyph $top={680}>的</BackGlyph>
      <TopTab />
      <Streak width="1400" height="80">
        <path d="M1255 71q26 2 38 9h-20z" fill="#eef4f6" /><path d="M0 67l10-12" stroke="#b8e05a" strokeWidth="2" />
      </Streak>
      <Line $x={0} $y={6} $w={1915} $h={1} $c="#8a2a64" />
      <Line $x={0} $y={2} $w={76} $h={5} $c="#d01c30" />
      <Line $x={1840} $y={2} $w={80} $h={5} $c="#b81f3c" />
      <Line $x={1917} $y={0} $w={3} $h={1080} $c="linear-gradient(180deg,#d01c30 0 75px,#6a2350 85px,#6a2350 1000px,#d01c30 1015px)" />

      <Win>
        <TitleBar>
          <QuickBar><Disk /><Undo ml={17} /><Chevron ml={9} /><Undo r ml={13} /><Chevron ml={13} /></QuickBar>
          <svg width="10" height="11" style={{ margin: "4px 0 0 16px" }} fill="none" stroke="#c9d5e2" strokeWidth="1.500"><path d="M0 1h10M1 5l4 4 4-4z" /></svg>
          <Title>共享雨伞APP用户端功能表--20170610.xls&nbsp; [兼容模式] - Microsoft Excel</Title>
          <Buttons>
            <WinBtn $w={46}><svg width="18" height="6" style={{ marginTop: 8 }}><path d="M.5.5h17v5H.5z" fill="#e8ebee" stroke="#4d5967" /></svg></WinBtn>
            <WinBtn $w={45}><svg width="18" height="15"><path d="M2.500 2.500h13v10h-13z" fill="none" stroke="#4d5967" strokeWidth="5" /><path d="M2.500 2.500h13v10h-13z" fill="none" stroke="#e8ebee" strokeWidth="3" /></svg></WinBtn>
            <WinBtn $w={77} $close><svg width="18" height="15"><path d="M3 2l12 11M15 2L3 13" stroke="#6d463f" strokeWidth="5.500" /><path d="M3 2l12 11M15 2L3 13" stroke="#eeeeee" strokeWidth="3.500" /></svg></WinBtn>
          </Buttons>
        </TitleBar>
        <Client>
          <TabRow>
            <Tab $active>开始</Tab>
            {tabs.map((t) => <Tab key={t}>{t}</Tab>)}
            <TabTools>
              <svg width="24" height="24"><circle cx="12" cy="12" r="10.500" fill="#d6e2f2" stroke="#5f7db4" /><circle cx="12" cy="12" r="8.500" fill="#2c5bc0" /><text x="12" y="17.500" textAnchor="middle" fontFamily="Open Sans, sans-serif" fontWeight="700" fontSize="15" fill="#f0f4fa">?</text></svg>
              <svg width="13" height="4" style={{ margin: "9px 0 0 16px" }}><path d="M0 0h13v3H0z" fill="#6f7e92" /></svg>
              <svg width="16" height="12" style={{ marginLeft: 22 }} fill="none" stroke="#6f7e92" strokeWidth="1.500"><path d="M4 1h11v7H4zM1 4h11v7H1z" /><path d="M1 4h11M4 1.500h11" strokeWidth="3" /></svg>
              <svg width="15" height="13" style={{ marginLeft: 22 }}><path d="M2 1l11 11M13 1L2 12" stroke="#6f7e92" strokeWidth="3" /></svg>
            </TabTools>
          </TabRow>
          <RibbonGroups />
          <Formula>
            <NameBox><span>E41</span><Caret5 w={12} c="#1c1c1c" /></NameBox>
            <FxBar><div>
              <svg width="14" height="14"><circle cx="7" cy="7" r="6" fill="#a4b0c2" /><circle cx="8" cy="8" r="4" fill="#c4cfdf" /></svg>
              <svg width="15" height="14"><path d="M1 1l13 12M13 1L2 13" stroke="#5b6677" strokeWidth="3" /></svg>
              <svg width="21" height="16" style={{ marginLeft: -2 }}><path d="M1 9l6 5L20 1" fill="none" stroke="#5b6677" strokeWidth="3" /></svg>
              <span style={{ font: 'italic bold 22px "Liberation Serif", serif', color: "#4e5c74", marginLeft: -3 }}>f<small style={{ fontSize: 16 }}>x</small></span>
            </div></FxBar>
            <FormulaText>30000</FormulaText>
            <Expand><svg width="12" height="13" fill="none" stroke="#1c1c1c" strokeWidth="2.200"><path d="M1 1l5 4 5-4M1 7l5 4 5-4" /></svg></Expand>
          </Formula>
          <Sheet />
          <SheetBar>
            <Nav><Tri left bar /><Tri left /><Tri /><Tri bar /></Nav>
            <SheetTab>前端功能表</SheetTab>
            <NewTab><svg width="26" height="19"><path d="M5 5h18v9l-6 4H5z" fill="#dde3ea" stroke="#6b7b93" /><path d="M5 0v10M0 5h10M1.500 1.500l7 7M8.500 1.500l-7 7" stroke="#e0a044" strokeWidth="1.600" /></svg></NewTab>
            <HScroll>
              <HSplit /><svg width="7" height="12" style={{ marginLeft: 11 }}><path d="M7 0v12L0 6z" fill="#46597a" /></svg>
              <HThumb><svg width="12" height="12" stroke="#66738a" strokeWidth="1.300"><path d="M1 0v12M4.300 0v12M7.600 0v12M11 0v12" /></svg></HThumb>
              <svg width="8" height="12" style={{ marginLeft: 157 }}><path d="M0 0v12l8-6z" fill="#46597a" /></svg><HSplit $ml={12} />
            </HScroll>
          </SheetBar>
          <Status>
            <StatusLeft>编辑<svg width="26" height="20"><path d="M4 3h20v15H4z" fill="#e4e8ee" stroke="#333b55" /><circle cx="6" cy="5" r="5" fill="#c33" /></svg></StatusLeft>
            <StatusRight>
              <Views>
                <svg width="22" height="16" fill="#eee" stroke="#5a5d61" strokeWidth="1.300"><path d="M1 1h20v14H1zM1 5.500h20M1 10h20M8 1v14M14.500 1v14" /></svg>
                <svg width="22" height="18"><path d="M1 1h20v16H1z" fill="#a4a5a8" stroke="#5a5d61" strokeWidth="1.300" /><path d="M6 4h10v10H6z" fill="#dcdcdc" stroke="#5a5d61" /></svg>
                <svg width="22" height="17"><path d="M1 1h20v15H1z" fill="#9b9c9f" stroke="#5a5d61" strokeWidth="1.300" /><path d="M2 1h6v11H2zM9 1h5v11H9z" fill="#e4e4e4" /></svg>
              </Views>
              <Zoom>100%</Zoom>
              <Round />
              <svg width="168" height="16" stroke="#cad7ea" strokeWidth="1.500"><path d="M2 8h164M86 2v12" /></svg>
              <Round plus />
              <svg width="18" height="17" style={{ margin: "6px 0 0 auto" }} fill="#51699c"><path d="M0 13h3v3H0zM7 13h3v3H7zM14 13h3v3h-3zM7 7h3v3H7zM14 7h3v3h-3zM14 1h3v3h-3z" /></svg>
            </StatusRight>
          </Status>
        </Client>
      </Win>

      <Orb width="64" height="60" viewBox="0 0 64 60">
        <defs><radialGradient id="orb" cx=".5" cy=".35" r=".65"><stop offset="0" stopColor="#f4f3f1" /><stop offset=".65" stopColor="#d9dbdf" /><stop offset="1" stopColor="#9fa8b6" /></radialGradient></defs>
        <ellipse cx="32" cy="31" rx="29" ry="28" fill="url(#orb)" stroke="#6c7787" strokeWidth="1.500" /><ellipse cx="32" cy="31" rx="27.500" ry="26.500" fill="none" stroke="#f0f2f5" />
        <g fill="none" strokeWidth="4.500">
          <rect x="16" y="16" width="15" height="15" rx="2" stroke="#d4562a" />
          <rect x="37" y="23" width="8" height="7" rx="1" stroke="#3d84b8" strokeWidth="3.500" />
          <rect x="19" y="36" width="12" height="10" rx="2" stroke="#eeb036" />
          <rect x="37" y="36" width="11" height="9" rx="2" stroke="#5d9a3c" />
        </g>
        <path d="M27 31v7M34 28h5M34 39h5" stroke="#ecebea" strokeWidth="3" /><circle cx="29.500" cy="33.500" r="2.500" fill="#d4562a" />
      </Orb>

      <Recorder>
        <Seg $w={16}><svg width="8" height="24" fill="#a5a5a5">{[0, 4, 8, 12, 16, 20].map((y) => <path key={y} d={`M0 ${y}h2v2H0zM5 ${y}h2v2H5z`} />)}</svg></Seg>
        <Seg $w={76}>高清</Seg>
        <Seg $w={77} $dark><svg width="28" height="25"><path d="M1.500 1.500h25v22h-25z" fill="none" stroke="#777" strokeWidth="1.800" strokeDasharray="6 3" /></svg></Seg>
        <Seg $w={76}><svg width="28" height="25"><rect x="1" y="1" width="26" height="22" rx="2" fill="none" stroke="#858585" strokeWidth="1.500" /><path d="M1 2h26v4H1z" fill="#777" /><path d="M16 3h3v2h-3zM22 3h3v2h-3z" fill="#ddd" /></svg></Seg>
        <Seg $w={76}><svg width="28" height="25" fill="none" stroke="#8b8b8b" strokeWidth="1.700"><path d="M14 1.500L1.500 12.500H6V23h16V12.500h4.500z" /><path d="M10 9l4 5 4-5M14 14v6" strokeWidth="2.500" /></svg></Seg>
        <Seg $w={75}>结束</Seg>
      </Recorder>
      <Dotted />
      <Line $x={667} $y={6} $w={395} $h={1} $c="#d24a50" />

      <Pointer width="28" height="27"><path d="M10 2h8v7h7v8h-7v7h-8v-7H3V9h7z" transform="translate(1.500 1.500)" fill="#222" /><path d="M9 1h8v7h7v8h-7v7H9v-7H2V8h7z" fill="#f4f4f0" stroke="#26260c" strokeWidth="1.500" /></Pointer>
      <Timer><i />00:37:45</Timer>
      <Ball>66</Ball>
    </Desktop>
  );
}
